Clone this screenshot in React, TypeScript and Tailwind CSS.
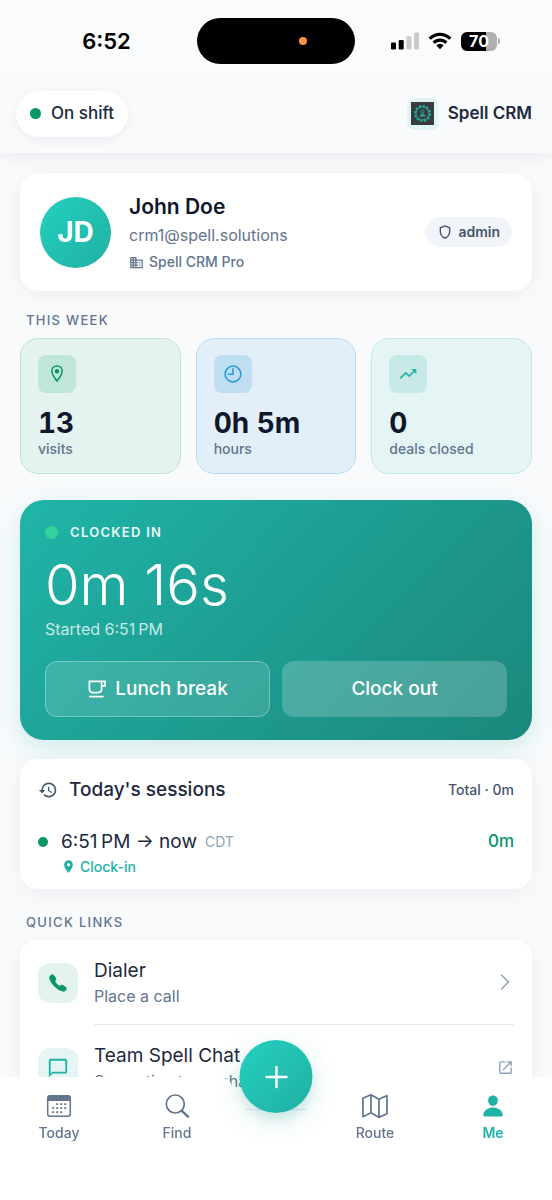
import type { ReactNode } from 'react'
import {
  MdBusiness,
  MdHistory,
  MdLocationOn,
  MdOpenInNew,
  MdOutlineChatBubbleOutline,
  MdOutlineShield,
  MdTrendingUp,
} from 'react-icons/md'
import { IoCall, IoPerson } from 'react-icons/io5'

const NAV_ITEMS_LEFT = [
  { label: 'Today', icon: <CalendarIcon />, active: false },
  { label: 'Find', icon: <SearchIcon />, active: false },
]

const NAV_ITEMS_RIGHT = [
  { label: 'Route', icon: <MapIcon />, active: false },
  { label: 'Me', icon: <IoPerson className="size-[26px] p-px" />, active: true },
]

const STATS = [
  {
    value: '13',
    label: 'visits',
    icon: <PinIcon />,
    card: 'border-[#bde3d6] bg-[#e4f3ef]',
    badge: 'bg-[#c0e5d9] text-[#059669]',
  },
  {
    value: '0h 5m',
    label: 'hours',
    icon: <ClockIcon />,
    card: 'border-[#b9dcf2] bg-[#e2eff8]',
    badge: 'bg-[#c0def1] text-[#2196d6]',
  },
  {
    value: '0',
    label: 'deals closed',
    icon: <MdTrendingUp className="size-5" />,
    card: 'border-[#c3e9e6] bg-[#e5f4f5]',
    badge: 'bg-[#c7eae7] text-[#20b2a6]',
  },
]

function CalendarIcon() {
  return (
    <svg className="size-[26px]" viewBox="0 0 26 26" fill="none">
      <rect x="1.7" y="2.7" width="22.6" height="20.6" rx="2.6" stroke="currentColor" strokeWidth="1.5" />
      <path d="M1.5 8V5a3 3 0 0 1 3-3h17a3 3 0 0 1 3 3v3z" fill="currentColor" />
      <path
        d="M10.2 11.2h2M14.2 11.2h2M18.2 11.2h2M6.2 15.2h2M10.2 15.2h2M14.2 15.2h2M18.2 15.2h2M6.2 19.2h2M10.2 19.2h2M14.2 19.2h2"
        stroke="currentColor"
        strokeWidth="1.8"
      />
    </svg>
  )
}

function SearchIcon() {
  return (
    <svg className="size-[26px]" viewBox="0 0 26 26" fill="none" stroke="currentColor" strokeLinecap="round">
      <circle cx="11.3" cy="11" r="9" strokeWidth="1.7" />
      <path d="M18 18l6 5.6" strokeWidth="2.4" />
    </svg>
  )
}

function MapIcon() {
  return (
    <svg
      className="size-[26px]"
      viewBox="0 0 26 26"
      fill="none"
      stroke="currentColor"
      strokeWidth="1.7"
      strokeLinejoin="round"
    >
      <path d="M.9 5.2 9 1.7l8 4.6 8-3.7v18.2l-8 3.6-8-4.6-8.1 3.9zM9 1.7v18.1M17 6.3v18.1" />
    </svg>
  )
}

function PinIcon() {
  return (
    <svg className="size-5" viewBox="0 0 20 20" fill="none">
      <path
        d="M10 1.9c-3 0-5.2 2.2-5.2 5.1 0 3.7 3.3 7.2 5.2 10.2 1.9-3 5.2-6.5 5.2-10.2 0-2.9-2.2-5.1-5.2-5.1z"
        stroke="currentColor"
        strokeWidth="1.5"
        strokeLinejoin="round"
      />
      <circle cx="10" cy="7.2" r="2.2" fill="currentColor" />
    </svg>
  )
}

function ClockIcon() {
  return (
    <svg className="size-5" viewBox="0 0 20 20" fill="none" stroke="currentColor" strokeWidth="1.5">
      <circle cx="10" cy="10" r="7.9" />
      <path d="M10 4.8V10.3H5.4" strokeLinecap="round" strokeLinejoin="round" />
    </svg>
  )
}

function CupIcon() {
  return (
    <svg className="size-5" viewBox="0 0 20 20" fill="none" stroke="currentColor" strokeWidth="1.7">
      <path d="M2.4 2.4H18v4.4h-3.4M14.6 2.4v8.2a3 3 0 0 1-3 3H5.4a3 3 0 0 1-3-3V1.6" />
      <path d="M2 17.6h14.6" />
    </svg>
  )
}

function WifiIcon() {
  return (
    <svg className="h-[18px] w-6" viewBox="0 0 24 18">
      <path d="M0.5 5.5C7-.9 17-.9 23.5 5.5L21.3 7.8C16 2.7 8 2.7 2.7 7.8z" />
      <path d="M4.5 9.5c4.2-4.1 10.8-4.1 15 0l-2.3 2.4c-2.9-2.8-7.5-2.8-10.4 0z" />
      <path d="M8.4 13.5c2-1.9 5.2-1.9 7.2 0L12 17.2z" />
    </svg>
  )
}

function SignalIcon() {
  return (
    <svg className="h-[18px] w-7" viewBox="0 0 28 18">
      <rect x="0" y="10.5" width="5" height="7" rx="1.3" />
      <rect x="7.7" y="8" width="5" height="9.5" rx="1.3" />
      <rect x="15.4" y="4.2" width="5" height="13.3" rx="1.3" fill="#c9cacc" />
      <rect x="23" y=".4" width="5" height="17.1" rx="1.3" fill="#c9cacc" />
    </svg>
  )
}

function LogoMark() {
  return (
    <svg className="size-[23px]" viewBox="0 0 23 23" fill="none" stroke="#1fa99d">
      <rect width="23" height="23" fill="#3b3b3d" stroke="none" />
      <circle cx="11.5" cy="11.5" r="7.6" strokeWidth="1.9" strokeDasharray="2.4 1.58" />
      <circle cx="11.5" cy="11.5" r="6.5" strokeWidth="1.1" />
      <circle cx="11.5" cy="9.8" r="1.5" strokeWidth="1" />
      <path d="M8.8 14.3c.5-3 4.9-3 5.4 0z" fill="#1fa99d" strokeWidth=".6" />
    </svg>
  )
}

function StatusBar() {
  return (
    <div className="flex h-[78px] items-center bg-[#fafbfc] pt-1 text-black">
      <div className="flex flex-1 justify-center pl-4 text-[22px] font-semibold">6:52</div>
      <div className="flex h-[46px] w-[158px] items-center justify-end rounded-full bg-black pr-12">
        <span className="size-2 rounded-full bg-[#fb923c]" />
      </div>
      <div className="flex flex-1 items-center justify-center gap-[9px] pr-4">
        <SignalIcon />
        <WifiIcon />
        <div className="flex items-center gap-px">
          <div className="flex h-[19px] w-9 items-center justify-center rounded-md bg-linear-to-r from-black from-70% to-[#aeafb1] to-70% text-base font-bold text-white">
            70
          </div>
          <span className="h-[6px] w-[2px] rounded-r-full bg-[#aeafb1]" />
        </div>
      </div>
    </div>
  )
}

function SectionTitle({ children }: { children: ReactNode }) {
  return (
    <h2 className="px-[6px] pb-2 text-[13px] leading-[19px] font-medium tracking-widest text-slate-500 uppercase">
      {children}
    </h2>
  )
}

function NavItem({ label, icon, active }: { label: string; icon: ReactNode; active: boolean }) {
  return (
    <a
      href={'#' + label.toLowerCase()}
      aria-current={active ? 'page' : undefined}
      className={
        active
          ? 'flex flex-1 flex-col items-center gap-1 text-sm leading-5 font-semibold text-[#20b2a6]'
          : 'flex flex-1 flex-col items-center gap-1 text-sm leading-5 font-medium text-slate-500'
      }
    >
      {icon}
      {label}
    </a>
  )
}

function BottomNav() {
  return (
    <nav className="fixed inset-x-0 bottom-0">
      {/* Bar background with the notch for the add button */}
      <div className="absolute inset-0 flex flex-col">
        <div className="flex h-[60px]">
          <div className="flex-1 bg-white" />
          <svg className="h-[60px] w-[120px]" viewBox="0 0 120 60" fill="#fff">
            <path d="M0 0Q14 0 16 9.34A45 45 0 0 0 104 9.34Q106 0 120 0V60H0z" />
          </svg>
          <div className="flex-1 bg-white" />
        </div>
        <div className="flex-1 bg-white" />
      </div>

      <button
        type="button"
        aria-label="Add"
        className="absolute -top-[37px] left-1/2 flex size-[73px] -translate-x-1/2 items-center justify-center rounded-full bg-linear-to-br from-[#25d0be] to-[#20b0a4] text-white shadow-[0_8px_24px_rgba(32,178,166,0.22),0_6px_10px_rgba(15,80,75,0.08)]"
      >
        <svg className="size-6" viewBox="0 0 24 24" stroke="currentColor" strokeWidth="2.4" strokeLinecap="round">
          <path d="M12 2v20M2 12h20" />
        </svg>
      </button>

      <div className="relative flex pt-4 pb-[57px]">
        {NAV_ITEMS_LEFT.map(item => (
          <NavItem key={item.label} {...item} />
        ))}
        <div className="w-20" />
        {NAV_ITEMS_RIGHT.map(item => (
          <NavItem key={item.label} {...item} />
        ))}
      </div>
    </nav>
  )
}

export default function App() {
  return (
    <div className="flex h-screen flex-col bg-[#f8fafc] font-['Inter',sans-serif] text-slate-800">
      <StatusBar />

      {/* Header */}
      <header className="relative flex h-[75px] items-center justify-between bg-[#f9fafc] pr-5 pb-1 pl-4 shadow-[0_4px_16px_rgba(15,23,42,0.06)]">
        <button
          type="button"
          className="flex h-[46px] items-center gap-[10px] rounded-full bg-white px-[14px] text-[17px] font-medium shadow-[0_3px_12px_rgba(15,23,42,0.06)]"
        >
          <span className="size-[11px] rounded-full bg-[#059669]" />
          On shift
        </button>
        <div className="flex items-center gap-[9px] text-[17px] font-semibold">
          <span className="flex size-8 items-center justify-center rounded-lg bg-[#e0f4f2]">
            <LogoMark />
          </span>
          Spell CRM
        </div>
      </header>

      <main className="flex-1 overflow-y-auto px-5 pt-5 pb-32 [scrollbar-width:none]">
        {/* Profile */}
        <section className="flex items-center rounded-[18px] bg-white px-5 py-4 shadow-[0_4px_20px_rgba(15,23,42,0.05)]">
          <div className="flex size-[71px] items-center justify-center rounded-full bg-linear-to-br from-[#25d0be] to-[#20b0a4] text-[28px] font-bold text-white">
            JD
          </div>
          <div className="ml-[18px] min-w-0 flex-1 pt-1">
            <h1 className="text-[21px] leading-7 font-semibold text-slate-900">John Doe</h1>
            <p className="text-base leading-7 text-slate-500">crm1@spell.solutions</p>
            <p className="flex items-center gap-[5px] text-sm leading-[26px] font-medium text-slate-500">
              <MdBusiness className="size-[15px]" />
              Spell CRM Pro
            </p>
          </div>
          <span className="flex h-[30px] items-center gap-[5px] rounded-full bg-slate-100 px-3 text-sm font-semibold text-slate-600">
            <MdOutlineShield className="size-4" />
            admin
          </span>
        </section>

        {/* Week stats */}
        <section className="mt-5">
          <SectionTitle>This week</SectionTitle>
          <div className="grid grid-cols-3 gap-[15px]">
            {STATS.map(stat => (
              <div key={stat.label} className={`rounded-[18px] border px-[17px] py-4 ${stat.card}`}>
                <div className={`flex size-[38px] items-center justify-center rounded-lg ${stat.badge}`}>
                  {stat.icon}
                </div>
                <div className="mt-3 text-[28px] leading-9 font-bold text-slate-900 tabular-nums">{stat.value}</div>
                <div className="text-sm leading-4 font-medium text-slate-500">{stat.label}</div>
              </div>
            ))}
          </div>
        </section>

        {/* Shift timer */}
        <section className="mt-[26px] rounded-3xl bg-linear-135 from-[#20b5a8] to-[#1b877c] px-[25px] pt-5 pb-[23px] text-white shadow-[0_8px_24px_rgba(32,178,166,0.18)]">
          <div className="flex items-center gap-3 text-[13px] leading-6 font-semibold tracking-widest text-white/90 uppercase">
            <span className="size-[13px] rounded-full bg-[#34d399]" />
            Clocked in
          </div>
          <div className="mt-[7px] text-[56px] leading-[68px] font-light">0m 16s</div>
          <div className="text-base leading-5 text-white/75">Started 6:51{'\u202f'}PM</div>
          <div className="mt-[22px] grid grid-cols-2 gap-3">
            <button
              type="button"
              className="flex h-14 items-center justify-center gap-2 rounded-xl border border-white/30 bg-white/13 text-[19px] font-medium"
            >
              <CupIcon />
              Lunch break
            </button>
            <button
              type="button"
              className="flex h-14 items-center justify-center rounded-xl bg-white/20 text-[19px] font-medium"
            >
              Clock out
            </button>
          </div>
        </section>

        {/* Sessions */}
        <section className="mt-[19px] rounded-[18px] bg-white px-[18px] pt-[17px] pb-3 shadow-[0_4px_20px_rgba(15,23,42,0.05)]">
          <div className="flex items-center">
            <MdHistory className="size-5 text-slate-600" />
            <h2 className="ml-[11px] flex-1 text-[19px] leading-7 font-medium">Today's sessions</h2>
            <span className="text-sm font-medium text-slate-600">Total · 0m</span>
          </div>
          <div className="mt-6 flex items-center">
            <span className="size-[10px] rounded-full bg-[#059669]" />
            <span className="ml-[13px] text-[19px] leading-7">6:51{'\u202f'}PM → now</span>
            <span className="ml-2 flex-1 text-sm text-slate-400">CDT</span>
            <span className="text-[17px] font-medium text-[#059669]">0m</span>
          </div>
          <a href="#clock-in" className="ml-[23px] flex items-center gap-1 text-sm leading-[21px] font-medium text-[#20b2a6]">
            <MdLocationOn className="size-[15px]" />
            Clock-in
          </a>
        </section>

        {/* Quick links */}
        <section className="mt-6">
          <SectionTitle>Quick links</SectionTitle>
          <div className="rounded-[18px] bg-white px-[18px] pb-20 shadow-[0_4px_20px_rgba(15,23,42,0.05)]">
            <a href="#dialer" className="flex items-center gap-4">
              <span className="flex size-10 items-center justify-center rounded-xl bg-[#e4f3ee] text-[#059669]">
                <IoCall className="size-5" />
              </span>
              <span className="flex h-[85px] flex-1 items-center justify-between border-b border-slate-200 pr-1">
                <span>
                  <span className="block text-[19px] leading-7">Dialer</span>
                  <span className="block text-base leading-[22px] text-slate-500">Place a call</span>
                </span>
                <svg className="h-4 w-[10px] text-slate-400" viewBox="0 0 10 16" fill="none" stroke="currentColor" strokeWidth="1.5">
                  <path d="M1.5 1l7 7-7 7" strokeLinecap="round" />
                </svg>
              </span>
            </a>
            <a href="#team-chat" className="flex items-center gap-4">
              <span className="flex size-10 items-center justify-center rounded-xl bg-[#e5f5f4] text-[#20b2a6]">
                <MdOutlineChatBubbleOutline className="size-[22px]" />
              </span>
              <span className="flex h-[85px] flex-1 items-center justify-between border-b border-slate-200">
                <span>
                  <span className="block text-[19px] leading-7">Team Spell Chat</span>
                  <span className="block text-base leading-[22px] text-slate-500">See native team chat</span>
                </span>
                <MdOpenInNew className="size-[17px] text-slate-400" />
              </span>
            </a>
          </div>
        </section>
      </main>

      <BottomNav />
    </div>
  )
}
